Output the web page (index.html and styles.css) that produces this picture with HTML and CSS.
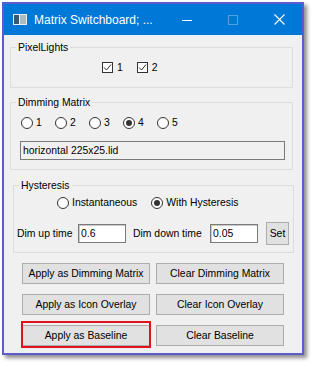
FILE: index.html
```html
<!DOCTYPE html>
<html>
<head>
<meta charset="utf-8">
<title>Matrix Switchboard</title>
<link rel="stylesheet" href="styles.css">
</head>
<body>
<div class="window">
  <div class="titlebar">
    <svg class="app-icon" width="14" height="11" viewBox="0 0 14 11">
      <rect x="0" y="0" width="14" height="11" fill="#e9eff1"/>
      <rect x="1" y="1" width="5" height="9" fill="#3b5873"/>
      <rect x="7" y="1" width="6" height="9" fill="#a7bdc5"/>
    </svg>
    <span class="title">Matrix Switchboard; ...</span>
    <div class="caption">
      <span class="cap"><svg width="10" height="10" viewBox="0 0 10 10"><line x1="0" y1="5.5" x2="10" y2="5.5" stroke="#fff" stroke-width="1"/></svg></span>
      <span class="cap"><svg width="10" height="10" viewBox="0 0 10 10"><rect x="0.5" y="0.5" width="9" height="9" fill="none" stroke="rgba(255,255,255,0.3)" stroke-width="1"/></svg></span>
      <span class="cap"><svg width="11" height="11" viewBox="0 0 11 11"><path d="M0.5 0.5 L10.5 10.5 M10.5 0.5 L0.5 10.5" stroke="#fff" stroke-width="1.1"/></svg></span>
    </div>
  </div>
  <div class="client">
    <fieldset class="group g-pixel">
      <legend>PixelLights</legend>
      <div class="gbody pixel-body">
        <label class="check"><span class="box"><svg width="9" height="9" viewBox="0 0 9 9"><path d="M1 4.5 L3.5 7 L8 1.5" fill="none" stroke="#333" stroke-width="1"/></svg></span>1</label>
        <label class="check"><span class="box"><svg width="9" height="9" viewBox="0 0 9 9"><path d="M1 4.5 L3.5 7 L8 1.5" fill="none" stroke="#333" stroke-width="1"/></svg></span>2</label>
      </div>
    </fieldset>

    <fieldset class="group g-dim">
      <legend>Dimming Matrix</legend>
      <div class="gbody dim-body">
        <div class="radio-row">
          <label class="radio num"><span class="circle"></span>1</label>
          <label class="radio num"><span class="circle"></span>2</label>
          <label class="radio num"><span class="circle"></span>3</label>
          <label class="radio num"><span class="circle on"><span class="dot"></span></span>4</label>
          <label class="radio num"><span class="circle"></span>5</label>
        </div>
        <div class="file-box">horizontal 225x25.lid</div>
      </div>
    </fieldset>

    <fieldset class="group g-hyst">
      <legend>Hysteresis</legend>
      <div class="gbody hyst-body">
        <div class="radio-row hyst-radios">
          <label class="radio wide"><span class="circle"></span>Instantaneous</label>
          <label class="radio"><span class="circle on"><span class="dot"></span></span>With Hysteresis</label>
        </div>
        <div class="time-row">
          <span class="lbl lbl-up">Dim up time</span>
          <span class="tbox">0.6</span>
          <span class="lbl lbl-down">Dim down time</span>
          <span class="tbox">0.05</span>
          <button class="btn set-btn">Set</button>
        </div>
      </div>
    </fieldset>

    <div class="actions">
      <button class="btn act">Apply as Dimming Matrix</button>
      <button class="btn act">Clear Dimming Matrix</button>
      <button class="btn act">Apply as Icon Overlay</button>
      <button class="btn act">Clear Icon Overlay</button>
      <button class="btn act highlighted">Apply as Baseline</button>
      <button class="btn act">Clear Baseline</button>
    </div>
  </div>
</div>
</body>
</html>
```

FILE: styles.css
```css
* { box-sizing: border-box; }
html, body { margin: 0; padding: 0; background: #ffffff; }
body {
  width: 312px;
  height: 367px;
  padding: 2px 0 0 2px;
  overflow: hidden;
  font-family: "Liberation Sans", Arial, sans-serif;
  font-size: 10.4px;
  color: #000;
}
.window {
  width: 302px;
  height: 353px;
  border: 2px solid #5e5bcd;
  background: #f0f0f0;
  box-shadow: 3px 3px 4px rgba(0, 0, 0, 0.45);
  display: flex;
  flex-direction: column;
}
.titlebar {
  flex: none;
  height: 31px;
  background: #0078d7;
  color: #fff;
  display: flex;
  align-items: center;
}
.app-icon { flex: none; margin-left: 9px; }
.title {
  flex: 1;
  margin-left: 7px;
  font-size: 12px;
  white-space: nowrap;
}
.caption { display: flex; height: 100%; margin-right: 0; }
.cap {
  width: 46px;
  display: flex;
  align-items: center;
  justify-content: center;
}
.cap svg { display: block; }

.client {
  flex: 1;
  padding: 6px 0 0 6px;
}
.group {
  margin: 0;
  padding: 0;
  min-width: 0;
  border: 1px solid #dcdcdc;
  border-radius: 1px;
  width: 283px;
}
.group legend {
  padding: 0 2px;
  margin-left: 5px;
  line-height: 13px;
}
.gbody { display: block; }

.pixel-body {
  display: flex;
  align-items: center;
  padding: 7px 0 13px 91px;
  height: 33px;
}
.check {
  display: inline-flex;
  align-items: center;
  line-height: 13px;
  margin-right: 14px;
}
.box {
  width: 11px;
  height: 11px;
  border: 1px solid #333;
  background: #fff;
  margin-right: 4px;
  display: flex;
  align-items: center;
  justify-content: center;
}
.box svg { display: block; }

.g-dim { margin-top: 8px; }
.dim-body { padding: 8px 0 9px 10px; }
.radio-row { display: flex; align-items: center; height: 12px; }
.radio {
  display: inline-flex;
  align-items: center;
  line-height: 12px;
  white-space: nowrap;
}
.radio.num { width: 34px; }
.circle {
  flex: none;
  width: 12px;
  height: 12px;
  border: 1px solid #333;
  border-radius: 50%;
  background: #fff;
  margin-right: 3px;
  display: flex;
  align-items: center;
  justify-content: center;
}
.dot {
  width: 6px;
  height: 6px;
  border-radius: 50%;
  background: #333;
}
.file-box {
  margin-top: 12px;
  margin-left: -1px;
  width: 265px;
  height: 19px;
  border: 1px solid #7a7a7a;
  background: #f0f0f0;
  padding-left: 2px;
  line-height: 17px;
}

.g-hyst { margin-top: 9px; margin-left: 3px; width: 281px; }
.hyst-body { padding: 5px 0 7px 0; }
.hyst-radios { padding-left: 43px; }
.radio.wide { margin-right: 14px; }
.time-row {
  display: flex;
  align-items: center;
  height: 23px;
  margin-top: 13px;
  padding-left: 3px;
}
.lbl { white-space: nowrap; }
.lbl-up { width: 61px; }
.lbl-down { width: 77px; margin-left: 7px; }
.tbox {
  width: 48px;
  height: 19px;
  border: 1px solid #7a7a7a;
  box-shadow: inset 1px 1px 0 #c9c9c9;
  background: #fff;
  padding-left: 2px;
  line-height: 17px;
}

.btn {
  font-family: inherit;
  font-size: inherit;
  color: #000;
  background: #e1e1e1;
  border: 1px solid #adadad;
  padding: 0;
  margin: 0;
  border-radius: 0;
}
.set-btn { width: 23px; height: 23px; margin-left: 8px; }

.actions {
  display: grid;
  grid-template-columns: 128px 128px;
  grid-auto-rows: 21px;
  column-gap: 6px;
  row-gap: 10px;
  margin-top: 10px;
  margin-left: 12px;
}
.act { height: 21px; white-space: nowrap; }
.highlighted { position: relative; }
.highlighted::after {
  content: "";
  position: absolute;
  top: -5px;
  bottom: -3px;
  left: -2px;
  right: -2px;
  border: 2px solid #e0141e;
}
```
